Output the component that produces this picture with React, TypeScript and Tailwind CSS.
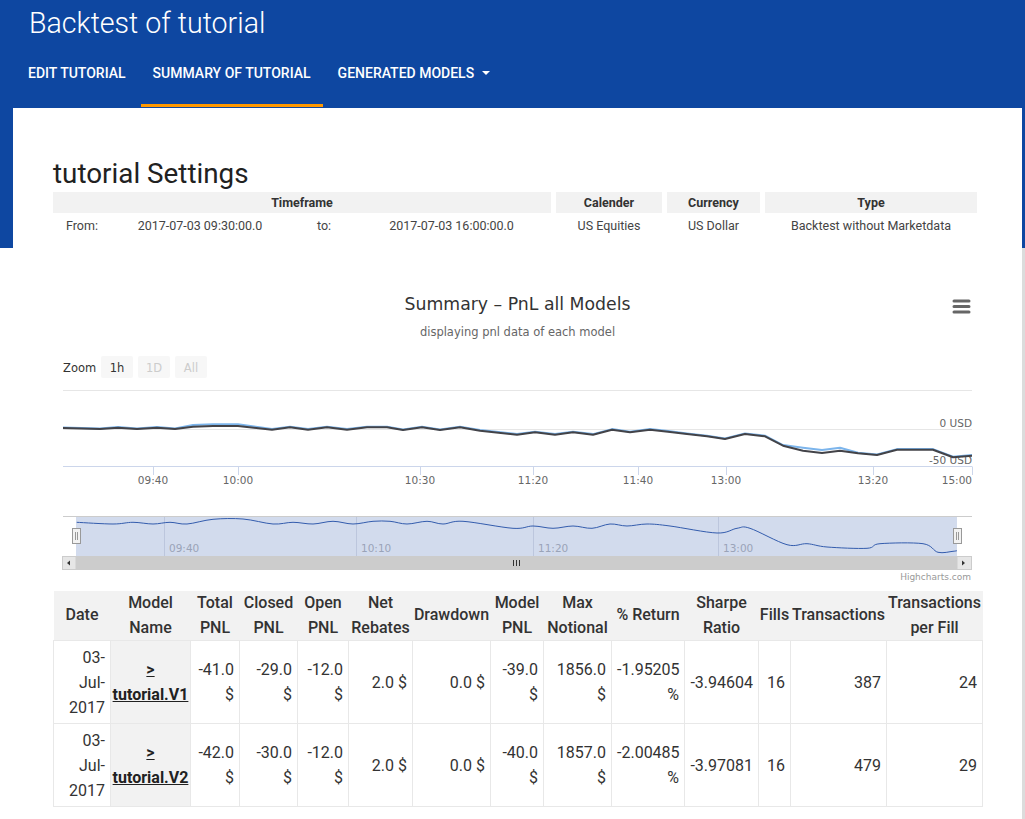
import React from "react";

type Pt = [number, number];

// main series (dark) in svg coordinates
const darkPts: Pt[] = [
  [10, 144], [47, 145], [65, 143.7], [84, 145], [104, 143.7], [122, 145], [140, 142.7], [160, 142],
  [185, 142], [219, 145.7], [237, 143.3], [255, 145.7], [274, 143.3], [294, 145.7], [314, 143.3],
  [334, 143.3], [350, 146], [369, 143.3], [387, 146], [407, 143.3], [427, 146.7], [464, 150.7],
  [482, 148.3], [502, 150.7], [520, 148.3], [540, 150.7], [559, 145.7], [577, 148.3], [597, 145.7],
  [615, 147.7], [634, 150], [654, 152.3], [672, 155], [692, 150], [712, 152.3], [730, 161.7],
  [750, 166.7], [769, 169], [787, 166.7], [805, 169.3], [824, 171], [844, 165.7], [880, 165.7],
  [900, 173.3], [919, 171.7],
];

const bluePts: Pt[] = darkPts.map(([x, y]) => [
  x,
  y - (x >= 130 && x <= 200 ? 1.8 : x >= 745 && x <= 790 ? 3 : 0.6),
]);

const navPts: Pt[] = [
  [23.7, 238.3], [60, 240], [80, 238.3], [100, 240], [117, 238.3], [134, 240], [160, 235.3], [190, 235],
  [220, 240], [240, 238.3], [260, 240], [280, 237.3], [300, 240], [320, 237.3], [337, 237.3], [354, 240],
  [374, 237.3], [390, 240], [410, 237.3], [460, 244.3], [480, 242], [500, 244.3], [520, 242], [539, 244.3],
  [557, 240], [574, 242], [594, 240], [617, 242], [664, 249], [684, 244.3], [697, 244.3], [734, 260.7],
  [754, 259.7], [774, 263], [814, 264.3], [827, 259.7], [870, 259.7], [885, 268.3], [900, 267.3], [904, 266.7],
];

function line(pts: Pt[]) {
  return pts.map(([x, y], i) => `${i ? "L" : "M"}${x} ${y}`).join(" ");
}

function smooth(pts: Pt[]) {
  let d = `M${pts[0][0]} ${pts[0][1]}`;
  for (let i = 0; i < pts.length - 1; i++) {
    const p0 = pts[i - 1] || pts[i];
    const p1 = pts[i];
    const p2 = pts[i + 1];
    const p3 = pts[i + 2] || p2;
    const c1x = p1[0] + (p2[0] - p0[0]) / 6;
    const c1y = p1[1] + (p2[1] - p0[1]) / 6;
    const c2x = p2[0] - (p3[0] - p1[0]) / 6;
    const c2y = p2[1] - (p3[1] - p1[1]) / 6;
    d += ` C${c1x} ${c1y} ${c2x} ${c2y} ${p2[0]} ${p2[1]}`;
  }
  return d;
}

const xTicks: { x: number; label: string; anchor?: "middle" | "end" }[] = [
  { x: 100, label: "09:40" },
  { x: 185, label: "10:00" },
  { x: 367, label: "10:30" },
  { x: 480, label: "11:20" },
  { x: 585, label: "11:40" },
  { x: 673, label: "13:00" },
  { x: 820, label: "13:20" },
  { x: 919, label: "15:00", anchor: "end" },
];

const navTicks = [
  { x: 111, label: "09:40" },
  { x: 303, label: "10:10" },
  { x: 480, label: "11:20" },
  { x: 665, label: "13:00" },
];

function Chart() {
  return (
    <svg width={929} height={305} className="mt-[46px] block font-['DejaVu_Sans',sans-serif]">
      <text x={464.5} y={25.7} textAnchor="middle" fontSize={17.3} fill="#333">
        Summary – PnL all Models
      </text>
      <text x={464.5} y={52.3} textAnchor="middle" fontSize={11.5} fill="#666">
        displaying pnl data of each model
      </text>
      <path d="M901 17H916M901 22.5H916M901 28H916" stroke="#666" strokeWidth={3} strokeLinecap="round" />

      {/* range selector */}
      <text x={10} y={87.5} fontSize={11.5} fill="#333">Zoom</text>
      <rect x={48} y={72} width={32} height={22} rx={2} fill="#f7f7f7" />
      <text x={64} y={87.5} textAnchor="middle" fontSize={11.5} fill="#333">1h</text>
      <rect x={85} y={72} width={32} height={22} rx={2} fill="#f7f7f7" />
      <text x={101} y={87.5} textAnchor="middle" fontSize={11.5} fill="#cccccc">1D</text>
      <rect x={122} y={72} width={32} height={22} rx={2} fill="#f7f7f7" />
      <text x={138} y={87.5} textAnchor="middle" fontSize={11.5} fill="#cccccc">All</text>

      {/* plot */}
      <path d="M10 106.5H919M10 145.5H919" stroke="#e6e6e6" />
      <path d="M10 182.5H919" stroke="#ccd6eb" />
      {xTicks.map((t) => (
        <g key={t.label}>
          <path d={`M${t.x + 0.5} 182.5V191`} stroke="#ccd6eb" />
          <text x={t.x} y={200} textAnchor={t.anchor || "middle"} fontSize={10.5} fill="#666">
            {t.label}
          </text>
        </g>
      ))}
      <text x={919} y={143} textAnchor="end" fontSize={10.5} fill="#666">0 USD</text>
      <text x={919} y={180} textAnchor="end" fontSize={10.5} fill="#666">-50 USD</text>
      <path d={line(bluePts)} fill="none" stroke="#7cb5ec" strokeWidth={2} strokeLinejoin="round" />
      <path d={line(darkPts)} fill="none" stroke="#434348" strokeWidth={2} strokeLinejoin="round" />

      {/* navigator */}
      <rect x={23} y={232} width={881} height={40} fill="#d2dbed" />
      {navTicks.map((t) => (
        <g key={t.label}>
          <path d={`M${t.x + 0.5} 232V272`} stroke="#bcc6dd" />
          <text x={t.x + 5} y={267.7} fontSize={10.5} fill="#9aa3b8">{t.label}</text>
        </g>
      ))}
      <path d={smooth(navPts)} fill="none" stroke="#335cad" strokeWidth={1} />
      <path d="M10 232.5H919" stroke="#cccccc" />
      <rect x={19.5} y={244.5} width={8} height={15} fill="#f2f2f2" stroke="#999" />
      <path d="M22.5 248V256M24.5 248V256" stroke="#999" />
      <rect x={900.5} y={244.5} width={8} height={15} fill="#f2f2f2" stroke="#999" />
      <path d="M903.5 248V256M905.5 248V256" stroke="#999" />

      {/* scrollbar */}
      <rect x={23} y={272} width={881} height={14} fill="#cccccc" />
      <rect x={9.5} y={272.5} width={13.5} height={13} fill="#e6e6e6" stroke="#cccccc" />
      <path d="M14 279L17 276.5V281.5Z" fill="#333" />
      <rect x={904} y={272.5} width={14.5} height={13} fill="#e6e6e6" stroke="#cccccc" />
      <path d="M912 279L909 276.5V281.5Z" fill="#333" />
      <path d="M460.5 276V282M463.5 276V282M466.5 276V282" stroke="#333" />

      <text x={918} y={296} textAnchor="end" fontSize={9} fill="#999">Highcharts.com</text>
    </svg>
  );
}

const headers = [
  "Date", "Model Name", "Total PNL", "Closed PNL", "Open PNL", "Net Rebates", "Drawdown",
  "Model PNL", "Max Notional", "% Return", "Sharpe Ratio", "Fills", "Transactions", "Transactions per Fill",
];
const colW = [
  "w-[57px]", "w-[80px]", "w-[49px]", "w-[58px]", "w-[51px]", "w-[64px]", "w-[78px]",
  "w-[53px]", "w-[68px]", "w-[73px]", "w-[74px]", "w-[32px]", "w-[96px]", "w-[96px]",
];

const rows = [
  { model: "tutorial.V1", vals: ["-41.0 $", "-29.0 $", "-12.0 $", "2.0 $", "0.0 $", "-39.0 $", "1856.0 $", "-1.95205 %", "-3.94604", "16", "387", "24"] },
  { model: "tutorial.V2", vals: ["-42.0 $", "-30.0 $", "-12.0 $", "2.0 $", "0.0 $", "-40.0 $", "1857.0 $", "-2.00485 %", "-3.97081", "16", "479", "29"] },
];

export default function App() {
  return (
    <div className="flex min-h-[819px] font-['Roboto',sans-serif] text-[#333]">
      <div className="w-[1022px] bg-[linear-gradient(to_bottom,#0e47a1_248px,#ffffff_248px)]">
        <header className="h-[108px] text-white">
          <h1 className="pl-[29px] pt-[5px] text-[28.6px] leading-[36px] font-light">Backtest of tutorial</h1>
          <nav className="ml-[16px] flex gap-[3px] text-[14px] leading-[20px] font-medium uppercase">
            <a className="h-[66px] px-[12px] pt-[22px]">Edit tutorial</a>
            <a className="h-[66px] px-[12px] pt-[22px] border-b-[3px] border-[#ff9800]">Summary of tutorial</a>
            <a className="h-[66px] px-[12px] pt-[22px] flex items-start">
              Generated models
              <svg width="8" height="4" className="ml-[8px] mt-[8px]">
                <path d="M0 0L4 4L8 0Z" fill="#fff" />
              </svg>
            </a>
          </nav>
        </header>

        <main className="ml-[13px] w-[1009px] min-h-[711px] bg-white px-[40px] pt-[51px] pb-[20px]">
          <h3 className="text-[27.8px] leading-[30px] font-normal text-[#212121]">tutorial Settings</h3>
          <table className="mt-[3px] -ml-[5px] w-[934px] table-fixed border-separate border-spacing-x-[5px] border-spacing-y-0 text-[12.5px]">
            <colgroup>
              <col className="w-[58px]" />
              <col className="w-[168px]" />
              <col className="w-[70px]" />
              <col className="w-[187px]" />
              <col className="w-[106px]" />
              <col className="w-[93px]" />
              <col className="w-[212px]" />
            </colgroup>
            <thead>
              <tr className="text-[#333]">
                <th colSpan={4} className="h-[21px] bg-[#f2f2f2] p-0 leading-[21px] font-bold">Timeframe</th>
                <th className="bg-[#f2f2f2] p-0 leading-[21px] font-bold">Calender</th>
                <th className="bg-[#f2f2f2] p-0 leading-[21px] font-bold">Currency</th>
                <th className="bg-[#f2f2f2] p-0 leading-[21px] font-bold">Type</th>
              </tr>
            </thead>
            <tbody className="text-center text-[#444]">
              <tr>
                <td className="py-[4px] leading-[17px]">From:</td>
                <td className="py-[4px] leading-[17px]">2017-07-03 09:30:00.0</td>
                <td className="py-[4px] leading-[17px]">to:</td>
                <td className="py-[4px] pr-[12px] leading-[17px]">2017-07-03 16:00:00.0</td>
                <td className="py-[4px] leading-[17px]">US Equities</td>
                <td className="py-[4px] leading-[17px]">US Dollar</td>
                <td className="py-[4px] leading-[17px]">Backtest without Marketdata</td>
              </tr>
            </tbody>
          </table>

          <Chart />

          <table className="mt-[2px] w-[929px] table-fixed border-collapse text-[16px] leading-[25px]">
            <colgroup>
              {colW.map((w, i) => (
                <col key={i} className={w} />
              ))}
            </colgroup>
            <thead>
              <tr className="bg-[#f2f2f2]">
                {headers.map((h) => (
                  <th key={h} className="h-[49px] px-[1px] py-0 text-center align-middle leading-[24.5px] font-medium">
                    {h}
                  </th>
                ))}
              </tr>
            </thead>
            <tbody>
              {rows.map((r) => (
                <tr key={r.model}>
                  <td className="border border-[#e8e8e8] py-[3.5px] pr-[5px] pl-[2px] text-right align-middle">
                    03-<br />Jul-<br />2017
                  </td>
                  <td className="border border-[#e8e8e8] bg-[#f2f2f2] px-[1px] py-[3.5px] text-center align-middle font-bold">
                    <a className="underline text-[#212121]">&gt; {r.model}</a>
                  </td>
                  {r.vals.map((v, i) => (
                    <td key={i} className="border border-[#e8e8e8] py-[3.5px] pr-[5px] pl-[5px] text-right align-middle">
                      {v}
                    </td>
                  ))}
                </tr>
              ))}
            </tbody>
          </table>
        </main>
      </div>
      <div className="w-[3px] bg-[linear-gradient(to_bottom,#0e47a1_248px,#dcdcdc_248px)]" />
    </div>
  );
}
